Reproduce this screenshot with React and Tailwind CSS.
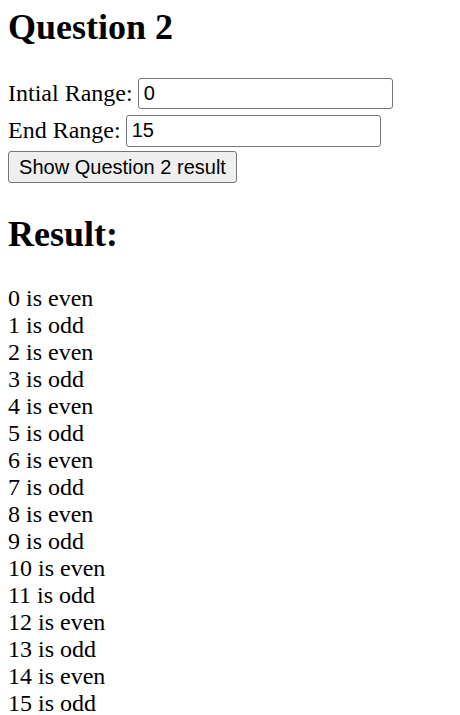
export default function App() {
  const rows = [];
  for (let i = 0; i <= 15; i++) rows.push(`${i} is ${i % 2 === 0 ? "even" : "odd"}`);
  return (
    <div className="bg-white text-black w-[460px] h-[715px] overflow-hidden px-[8px] font-['Liberation_Serif',serif]">
      <h2 className="text-[36px] leading-[41px] font-bold pt-[7px]">Question 2</h2>
      <div className="mt-[27px] flex flex-col">
        <div className="h-[37px] flex items-center text-[24px] leading-[27px]">
          <span>Intial Range:</span>
          <input
            defaultValue="0"
            className="ml-[5px] w-[255px] h-[31px] border border-[#767676] rounded-[3px] px-[5px] text-[20px] font-['Liberation_Sans',Arial,sans-serif] outline-none"
          />
        </div>
        <div className="h-[37px] flex items-center text-[24px] leading-[27px]">
          <span>End Range:</span>
          <input
            defaultValue="15"
            className="ml-[5px] w-[255px] h-[32px] border border-[#767676] rounded-[3px] px-[5px] text-[20px] font-['Liberation_Sans',Arial,sans-serif] outline-none"
          />
        </div>
        <div className="h-[36px] flex items-center">
          <button className="h-[32px] w-[229px] bg-[#efefef] border border-[#767676] rounded-[3px] text-[20px] leading-[24px] font-['Liberation_Sans',Arial,sans-serif] text-black">
            Show Question 2 result
          </button>
        </div>
      </div>
      <h2 className="text-[36px] leading-[41px] font-bold mt-[29px]">Result:</h2>
      <div className="mt-[30px] text-[24px] leading-[27px]">
        {rows.map((r) => (
          <div key={r}>{r}</div>
        ))}
      </div>
    </div>
  );
}
